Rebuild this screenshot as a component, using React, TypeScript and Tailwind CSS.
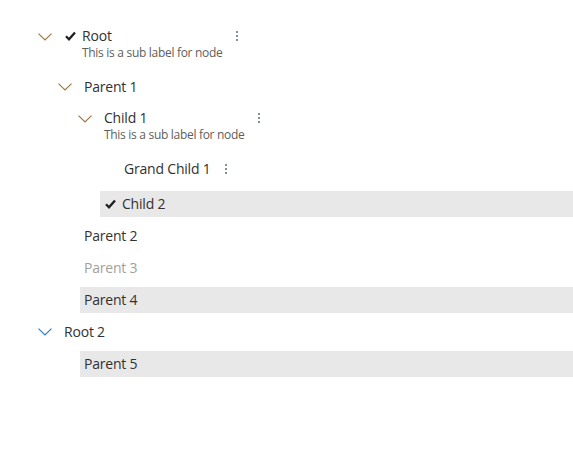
import type { FC } from "react";

const BROWN = "#a07641";
const BLUE = "#3479c0";

const Chevron: FC<{ color: string }> = ({ color }) => (
  <svg width="14" height="8" viewBox="0 0 14 8" fill="none" className="shrink-0">
    <path d="M0.5 0.6 L7 7 L13.5 0.6" stroke={color} strokeWidth="1.15" />
  </svg>
);

const Check: FC = () => (
  <svg width="11" height="10" viewBox="0 0 11 10" fill="none" className="shrink-0">
    <path d="M1 5.2 L4 8.2 L10 1.4" stroke="#201f1e" strokeWidth="2.3" />
  </svg>
);

const Dots: FC = () => (
  <svg width="4" height="12" viewBox="0 0 4 12" className="shrink-0">
    <circle cx="2" cy="2" r="1" fill="#55698a" />
    <circle cx="2" cy="6" r="1" fill="#55698a" />
    <circle cx="2" cy="10" r="1" fill="#55698a" />
  </svg>
);

interface IRowProps {
  level: number;
  label: string;
  subLabel?: string;
  chevron?: string;
  checked?: boolean;
  selected?: boolean;
  disabled?: boolean;
  menu?: boolean;
  className?: string;
}

const Row: FC<IRowProps> = ({
  level,
  label,
  subLabel,
  chevron,
  checked,
  selected,
  disabled,
  menu,
  className,
}) => {
  const indent = ["pl-[36px]", "pl-[56px]", "pl-[76px]", "pl-[96px]"][level];

  return (
    <div className={`flex ${indent} ${subLabel ? "h-[50px] pt-[5px]" : "h-[32px] py-[3px]"} ${className ?? ""}`}>
      {chevron ? (
        <span className={`flex h-[20px] w-[24px] shrink-0 items-center pl-[2px] ${subLabel ? "mt-px" : "mt-[3px]"}`}>
          <Chevron color={chevron} />
        </span>
      ) : (
        <span className="w-[24px] shrink-0" />
      )}
      <div
        className={`flex flex-1 items-start px-1 ${subLabel ? "" : "h-[26px] pt-[3px]"} ${selected ? "bg-[#e8e8e8]" : ""}`}
      >
        {checked && (
          <span className="ml-px mr-[6px] flex h-[20px] w-[11px] items-center">
            <Check />
          </span>
        )}
        <div className="flex flex-col">
          <span
            className={`tracking-[-0.2px] ${subLabel ? "h-[19px]" : "h-[20px]"} ${disabled ? "text-[#a19f9d]" : "text-[#323130]"}`}
          >
            {label}
          </span>
          {subLabel && (
            <span className="h-[16px] text-[12px] leading-[16px] tracking-[-0.3px] text-[#605e5c]">
              {subLabel}
            </span>
          )}
        </div>
        {menu && (
          <span className="ml-[13px] flex h-[20px] items-center">
            <Dots />
          </span>
        )}
      </div>
    </div>
  );
};

const App: FC = () => (
  <div
    className="h-[461px] w-[573px] bg-white pt-[21px] text-[14px] leading-[20px]"
    style={{ fontFamily: '"Open Sans", "Noto Sans", sans-serif' }}
  >
    <Row level={0} label="Root" subLabel="This is a sub label for node" chevron={BROWN} checked menu />
    <Row level={1} label="Parent 1" chevron={BROWN} />
    <Row level={2} label="Child 1" subLabel="This is a sub label for node" chevron={BROWN} menu />
    <Row level={3} label="Grand Child 1" menu />
    <Row level={2} label="Child 2" checked selected className="mt-[3px]" />
    <Row level={1} label="Parent 2" />
    <Row level={1} label="Parent 3" disabled />
    <Row level={1} label="Parent 4" selected />
    <Row level={0} label="Root 2" chevron={BLUE} />
    <Row level={1} label="Parent 5" selected />
  </div>
);

export default App;
